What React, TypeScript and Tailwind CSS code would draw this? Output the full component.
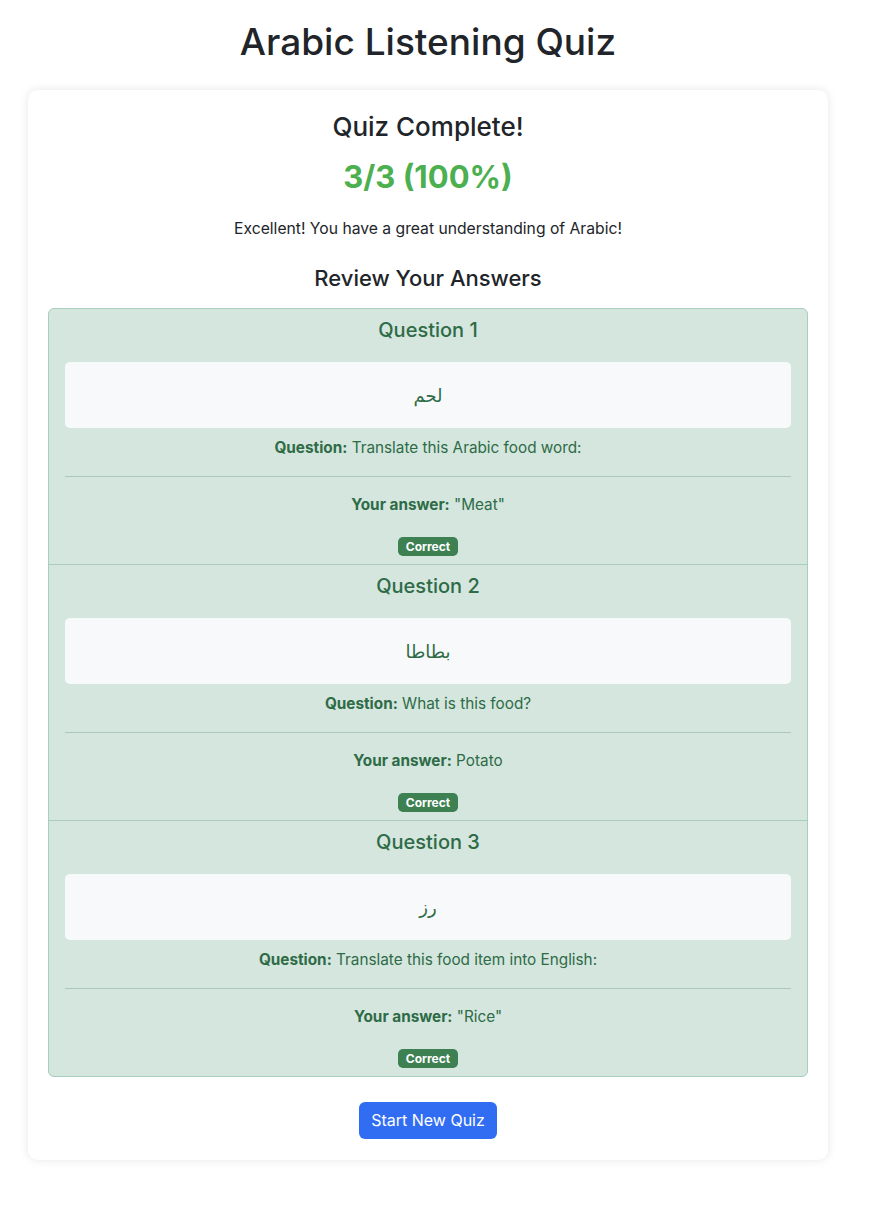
import React from "react";

type Review = {
  word: string;
  question: string;
  answer: string;
};

const reviews: Review[] = [
  { word: "لحم", question: "Translate this Arabic food word:", answer: '"Meat"' },
  { word: "بطاطا", question: "What is this food?", answer: "Potato" },
  { word: "رز", question: "Translate this food item into English:", answer: '"Rice"' },
];

function ReviewItem({ item, index, last }: { item: Review; index: number; last: boolean }) {
  return (
    <div
      className={`px-4 pt-[9px] pb-[8px] text-center text-[#2e6b46] ${
        last ? "" : "border-b border-[#a8cfbd]"
      }`}
    >
      <h5 className="text-[20px] leading-[24px] font-medium mb-5">Question {index + 1}</h5>
      <div
        className="bg-[#f8f9fa] rounded-[5px] h-[66px] flex items-center justify-center text-[18px]"
        dir="rtl"
        style={{ fontFamily: '"DejaVu Sans", "Noto Sans", sans-serif' }}
      >
        {item.word}
      </div>
      <p className="mt-2 text-[15.3px] leading-[24px]">
        <span className="font-bold">Question:</span> {item.question}
      </p>
      <hr className="my-4 border-t border-[#a9cbb8]" />
      <p className="mt-[1px] text-[15.3px] leading-[24px]">
        <span className="font-bold">Your answer:</span> {item.answer}
      </p>
      <div className="mt-[20px] flex justify-center">
        <span className="bg-[#3d8152] text-white text-[12px] font-bold leading-[19px] px-[8px] rounded-[5px]">
          Correct
        </span>
      </div>
    </div>
  );
}

export default function App() {
  return (
    <div
      className="min-h-screen bg-white text-[#212529] pt-[18px] pl-[28px]"
      style={{ fontFamily: "Inter, 'Liberation Sans', sans-serif" }}
    >
      <div className="w-[800px]">
        <h1 className="text-[37px] leading-[48px] font-medium text-center mb-6">Arabic Listening Quiz</h1>

        {/* Results card */}
        <div className="bg-white rounded-[10px] shadow-[0_0_10px_rgba(0,0,0,0.1)] px-5 pt-5 pb-[21px] text-center">
          <h2 className="text-[26px] leading-[34px] font-medium">Quiz Complete!</h2>
          <div className="text-[31px] leading-[40px] font-bold text-[#4caf50] mt-[13px]">3/3 (100%)</div>
          <p className="text-[15.7px] leading-[24px] mt-[20px]">
            Excellent! You have a great understanding of Arabic!
          </p>
          <h4 className="text-[22px] leading-[28px] font-medium mt-[23px] mb-[16px]">Review Your Answers</h4>

          <div className="bg-[#d4e6de] border border-[#a8cfbd] rounded-[6px] overflow-hidden">
            {reviews.map((r, i) => (
              <ReviewItem key={i} item={r} index={i} last={i === reviews.length - 1} />
            ))}
          </div>

          <button className="mt-[25px] bg-[#316df3] text-white text-[16px] leading-[25px] px-3 py-[6px] rounded-[6px]">
            Start New Quiz
          </button>
        </div>
      </div>
    </div>
  );
}
